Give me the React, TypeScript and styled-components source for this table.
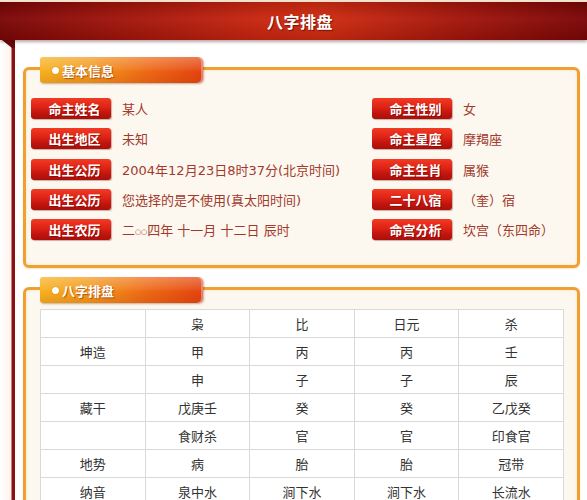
import React from "react";
import styled, { createGlobalStyle } from "styled-components";

const GlobalStyle = createGlobalStyle`
  html, body { margin: 0; padding: 0; background: #ffffff; }
  body { font-family: "DejaVu Sans", "Noto Sans CJK SC", sans-serif; }
`;

const Page = styled.div`
  width: 587px;
  min-height: 500px;
  background: #fff;
`;

const TopStrip = styled.div`
  height: 2px;
  background: #f3e4cf;
`;

const TitleBar = styled.div`
  position: relative;
  z-index: 2;
  height: 38px;
  display: flex;
  align-items: center;
  justify-content: center;
  background:
    linear-gradient(to bottom, rgba(0,0,0,0.12), rgba(255,255,255,0.04) 45%, rgba(0,0,0,0.1) 100%),
    linear-gradient(to right, #7a0606 0%, #a3150b 22%, #c9260f 45%, #cf2b10 55%, #a3150b 78%, #7a0606 100%);
  box-shadow: 0 2px 3px rgba(60, 0, 0, 0.35);
`;

const Title = styled.h1`
  margin: 0 0 0 13px;
  font-family: "Noto Sans CJK SC", sans-serif;
  font-size: 16px;
  font-weight: 700;
  color: #fff;
  letter-spacing: 0.5px;
  text-shadow: 1px 1px 1px rgba(60, 0, 0, 0.6);
`;

const Body = styled.div`
  display: flex;
  align-items: stretch;
`;

const Rail = styled.div`
  flex: 0 0 15px;
  min-height: 460px;
  background: linear-gradient(to right, #ffffff 0, #fdf2f0 11px, #8c1212 12px, #8c1212 15px);
`;

const Fold = styled.svg`
  display: block;
`;

const Main = styled.div`
  flex: 1;
  padding: 17px 7px 0 8px;
  display: flex;
  flex-direction: column;
  gap: 9px;
`;

const Section = styled.section`
  display: flex;
  flex-direction: column;
`;

const Tab = styled.div`
  position: relative;
  z-index: 1;
  width: 163px;
  height: 26px;
  margin: 0 0 -16px 17px;
  box-sizing: border-box;
  padding-left: 12px;
  display: flex;
  align-items: center;
  gap: 3px;
  border-radius: 3px 5px 5px 3px;
  background:
    linear-gradient(to bottom, rgba(255,255,255,0.28) 0%, rgba(255,255,255,0.08) 45%, rgba(0,0,0,0.0) 55%, rgba(120,20,0,0.12) 100%),
    linear-gradient(to right, #f7b11f 0%, #f39a1c 30%, #ee6a16 65%, #e4440f 100%);
  box-shadow: 1px 1px 2px rgba(90, 30, 0, 0.35), inset -2px 0 0 rgba(255, 170, 170, 0.55);
  font-family: "Noto Sans CJK SC", sans-serif;
  font-size: 13px;
  font-weight: 700;
  color: #fff;
  text-shadow: 1px 1px 1px rgba(140, 40, 0, 0.6);
`;

const Dot = styled.span`
  width: 7px;
  height: 7px;
  border-radius: 50%;
  background: #fff;
  box-shadow: 0 0 1px rgba(120, 40, 0, 0.6);
`;

const Box = styled.div<{ $pt: number; $pb: number }>`
  border: 3px solid #f0a033;
  border-radius: 6px;
  background: #fcf8ef;
  box-shadow: inset 0 0 3px rgba(240, 160, 50, 0.25), 0 1px 2px rgba(200, 120, 0, 0.2);
  padding: ${(p) => p.$pt}px 13px ${(p) => p.$pb}px 5px;
`;

const InfoGrid = styled.div`
  display: grid;
  grid-template-columns: 341px 1fr;
  row-gap: 9.25px;
`;

const InfoCell = styled.div`
  display: flex;
  align-items: center;
  gap: 11px;
  height: 21px;
`;

const Label = styled.div`
  flex: 0 0 80px;
  height: 21px;
  box-sizing: border-box;
  padding-left: 7px;
  display: flex;
  align-items: center;
  justify-content: center;
  border-radius: 3px;
  background: linear-gradient(to bottom, #f23a24 0%, #dc2315 45%, #c3150e 70%, #a90f0a 100%);
  box-shadow: 1px 1px 1px rgba(80, 0, 0, 0.3);
  font-family: "Noto Sans CJK SC", sans-serif;
  font-size: 13px;
  font-weight: 700;
  color: #fff;
  white-space: nowrap;
  text-shadow: 1px 1px 0 rgba(90, 0, 0, 0.45);
`;

const Value = styled.span`
  font-size: 13px;
  color: #a2392d;
  white-space: nowrap;
`;

const SmallZero = styled.span`
  font-size: 7px;
  vertical-align: 1px;
`;

const TableWrap = styled.div`
  padding-left: 9px;
`;

const Table = styled.table`
  width: 524px;
  border-collapse: collapse;
  table-layout: fixed;
  background: #fff;
`;

const Cell = styled.td`
  height: 27px;
  padding: 0;
  border: 1px solid #d9d9d9;
  text-align: center;
  vertical-align: middle;
  font-size: 13px;
  color: #333;
`;

const info: [string, React.ReactNode, string, string][] = [
  ["命主姓名", "某人", "命主性别", "女"],
  ["出生地区", "未知", "命主星座", "摩羯座"],
  ["出生公历", "2004年12月23日8时37分(北京时间)", "命主生肖", "属猴"],
  ["出生公历", "您选择的是不使用(真太阳时间)", "二十八宿", "（奎）宿"],
  [
    "出生农历",
    <>
      二<SmallZero>○○</SmallZero>四年 十一月 十二日 辰时
    </>,
    "命宫分析",
    "坎宫（东四命）",
  ],
];

const rows: string[][] = [
  ["", "枭", "比", "日元", "杀"],
  ["坤造", "甲", "丙", "丙", "壬"],
  ["", "申", "子", "子", "辰"],
  ["藏干", "戊庚壬", "癸", "癸", "乙戊癸"],
  ["", "食财杀", "官", "官", "印食官"],
  ["地势", "病", "胎", "胎", "冠带"],
  ["纳音", "泉中水", "涧下水", "涧下水", "长流水"],
];

export default function App() {
  return (
    <Page>
      <GlobalStyle />
      <TopStrip />
      <TitleBar>
        <Title>八字排盘</Title>
      </TitleBar>
      <Body>
        <Rail>
          <Fold width="15" height="8" viewBox="0 0 15 8">
            <polygon points="2,0 15,0 15,8 12,8" fill="#6a0808" />
          </Fold>
        </Rail>
        <Main>
          <Section>
            <Tab>
              <Dot />
              基本信息
            </Tab>
            <Box $pt={28} $pb={25}>
              <InfoGrid>
                {info.map(([l1, v1, l2, v2], i) => (
                  <React.Fragment key={i}>
                    <InfoCell>
                      <Label>{l1}</Label>
                      <Value>{v1}</Value>
                    </InfoCell>
                    <InfoCell>
                      <Label>{l2}</Label>
                      <Value>{v2}</Value>
                    </InfoCell>
                  </React.Fragment>
                ))}
              </InfoGrid>
            </Box>
          </Section>
          <Section>
            <Tab>
              <Dot />
              八字排盘
            </Tab>
            <Box $pt={19} $pb={20}>
              <TableWrap>
                <Table>
                  <tbody>
                    {rows.map((r, i) => (
                      <tr key={i}>
                        {r.map((c, j) => (
                          <Cell key={j}>{c}</Cell>
                        ))}
                      </tr>
                    ))}
                  </tbody>
                </Table>
              </TableWrap>
            </Box>
          </Section>
        </Main>
      </Body>
    </Page>
  );
}
